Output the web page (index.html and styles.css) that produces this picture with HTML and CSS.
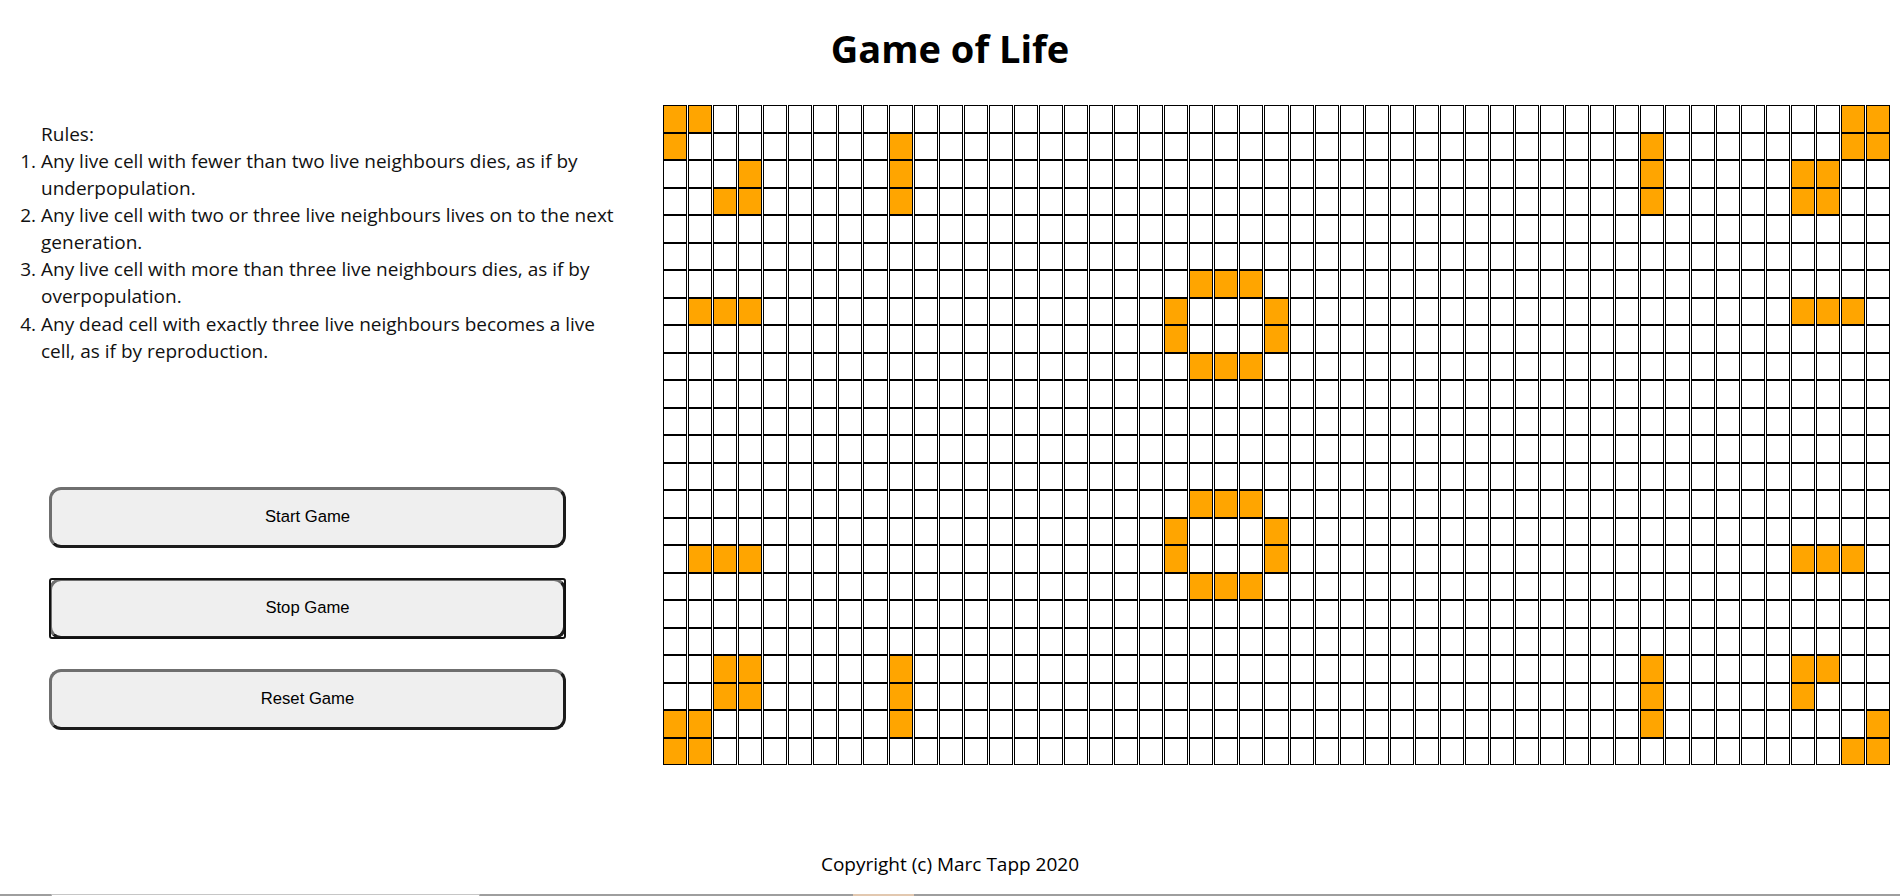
FILE: index.html
```html
<!DOCTYPE html>
<html lang="en">
<head>
<meta charset="utf-8">
<title>Game of Life</title>
<link rel="stylesheet" href="styles.css">
</head>
<body>
<h1 class="title">Game of Life</h1>
<main class="layout">
  <section class="panel">
    <div class="rules">
      <div class="rules-head">Rules:</div>
      <ol class="rules-list">
        <li>Any live cell with fewer than two live neighbours dies, as if by underpopulation.</li>
        <li>Any live cell with two or three live neighbours lives on to the next generation.</li>
        <li>Any live cell with more than three live neighbours dies, as if by overpopulation.</li>
        <li>Any dead cell with exactly three live neighbours becomes a live cell, as if by reproduction.</li>
      </ol>
    </div>
    <div class="controls">
      <button class="btn" type="button">Start Game</button>
      <button class="btn btn-focus" type="button">Stop Game</button>
      <button class="btn" type="button">Reset Game</button>
    </div>
  </section>
  <div class="board" id="board"></div>
</main>
<footer class="footer">Copyright (c) Marc Tapp 2020</footer>
<div class="strip">
  <span class="seg seg-a"></span>
  <span class="seg seg-b"></span>
  <span class="seg seg-c"></span>
  <span class="seg seg-d"></span>
  <span class="seg seg-e"></span>
</div>
<script src="script.js"></script>
</body>
</html>
```

FILE: styles.css
```css
html, body {
  margin: 0;
  padding: 0;
  background: #fff;
  overflow: hidden;
}

body {
  font-family: "Open Sans", "Noto Sans", sans-serif;
  color: #000;
}

.title {
  margin: 0;
  padding: 22px 0 31px;
  font-size: 38px;
  line-height: 52px;
  font-weight: 700;
  text-align: center;
}

.layout {
  display: flex;
  align-items: flex-start;
  height: 660px;
}

.panel {
  width: 663px;
  flex: none;
  display: flex;
  flex-direction: column;
  padding-top: 16px;
  box-sizing: border-box;
}

.rules {
  margin-left: 41px;
  width: 584px;
  font-size: 19px;
  line-height: 27.08px;
  color: #111;
}

.rules-list {
  margin: 0;
  padding: 0;
}

.controls {
  display: flex;
  flex-direction: column;
  gap: 30px;
  margin: 122px 0 0 49px;
  width: 517px;
}

.btn {
  position: relative;
  height: 61px;
  padding: 0;
  font-family: "Liberation Sans", Arial, sans-serif;
  font-size: 16.67px;
  color: #000;
  background: #efefef;
  border: 3px solid;
  border-color: #6f6f6f #1c1c1c #1c1c1c #6f6f6f;
  border-radius: 12px;
}

.btn-focus::after {
  content: "";
  position: absolute;
  inset: -3px;
  border: 2.5px solid #111;
  border-radius: 3px;
}

.board {
  display: grid;
  grid-template-columns: repeat(49, 1fr);
  grid-template-rows: repeat(24, 1fr);
  column-gap: 1px;
  width: 1227px;
  height: 660px;
  flex: none;
}

.cell {
  border: 1px solid #000;
  background: #fff;
  min-width: 0;
  min-height: 0;
}

.cell.live {
  background: #ffa500;
}

.footer {
  margin-top: 86px;
  text-align: center;
  font-size: 19px;
  line-height: 27px;
}

.strip {
  display: flex;
  height: 2px;
  margin-top: 16px;
}

.seg {
  display: block;
  height: 2px;
  box-sizing: border-box;
}

.seg-a { width: 51px; background: #9e9e9e; }
.seg-b { width: 429px; background: #fff; border-top: 1px solid #c6c6c6; border-left: 1px solid #b0b0b0; border-right: 1px solid #b0b0b0; }
.seg-c { width: 373px; background: #9e9e9e; }
.seg-d { width: 61px; background: #e2c8b0; }
.seg-e { flex: 1; background: #9e9e9e; }
```

FILE: script.js
```js
var live = {
  0: [0, 1, 47, 48],
  1: [0, 9, 39, 47, 48],
  2: [3, 9, 39, 45, 46],
  3: [2, 3, 9, 39, 45, 46],
  6: [21, 22, 23],
  7: [1, 2, 3, 20, 24, 45, 46, 47],
  8: [20, 24],
  9: [21, 22, 23],
  14: [21, 22, 23],
  15: [20, 24],
  16: [1, 2, 3, 20, 24, 45, 46, 47],
  17: [21, 22, 23],
  20: [2, 3, 9, 39, 45, 46],
  21: [2, 3, 9, 39, 45],
  22: [0, 1, 9, 39, 48],
  23: [0, 1, 47, 48]
};
var board = document.getElementById('board');
for (var r = 0; r < 24; r++) {
  var row = live[r] || [];
  for (var c = 0; c < 49; c++) {
    var cell = document.createElement('div');
    cell.className = row.indexOf(c) !== -1 ? 'cell live' : 'cell';
    board.appendChild(cell);
  }
}
```
